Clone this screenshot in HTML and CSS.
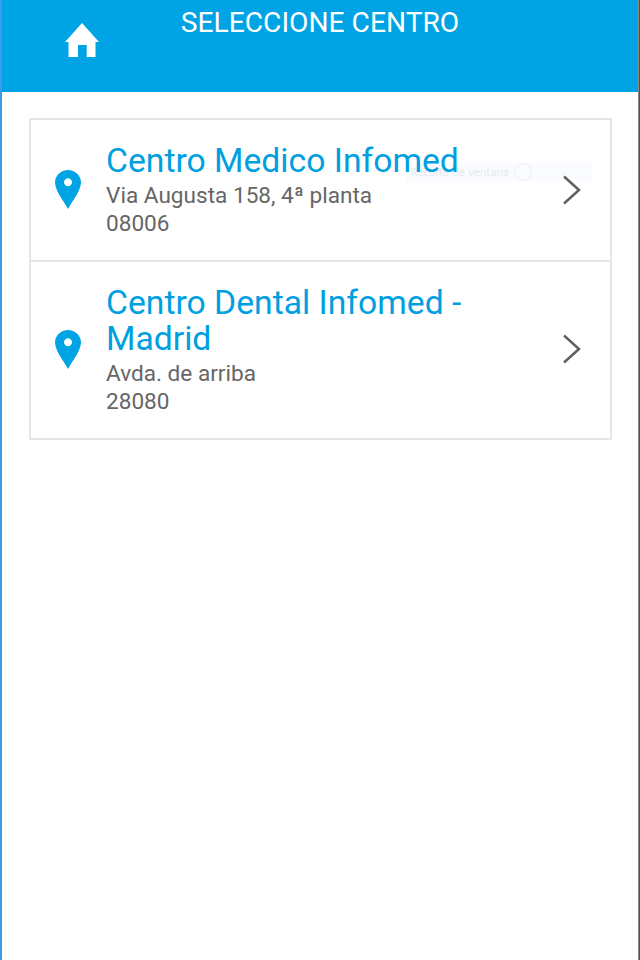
FILE: index.html
```html
<!DOCTYPE html>
<html lang="es">
<head>
<meta charset="utf-8">
<title>Seleccione centro</title>
<link rel="stylesheet" href="styles.css">
</head>
<body>
<div class="app">
  <header class="topbar">
    <svg class="home" viewBox="0 0 34 34" width="34" height="34"><path d="M17 0 L34 19 H30.500 V34 H21.700 V22 H13 V34 H3.500 V19 H0 Z" fill="#fff"/></svg>
    <h1 class="title">SELECCIONE CENTRO</h1>
  </header>
  <main class="content">
    <ul class="list">
      <li class="item first">
        <svg class="pin" viewBox="0 0 26 39" width="26" height="39"><path fill-rule="evenodd" d="M13 0C5.800 0 0 5.600 0 12.600 0 20.500 8.500 31 13 39 17.500 31 26 20.500 26 12.600 26 5.600 20.200 0 13 0ZM13 8.300C15.200 8.300 17 10.100 17 12.300 17 14.500 15.200 16.300 13 16.300 10.800 16.300 9 14.500 9 12.300 9 10.100 10.800 8.300 13 8.300Z" fill="#00a3e4"/></svg>
        <div class="text">
          <h2 class="name">Centro Medico Infomed</h2>
          <p class="addr">Via Augusta 158, 4ª planta</p>
          <p class="addr">08006</p>
        </div>
        <svg class="chev" viewBox="0 0 20 30" width="20" height="30"><path d="M2 1.500 L17 15 L2 28.500" fill="none" stroke="#606060" stroke-width="2.500"/></svg>
        <div class="ghost"><span class="ghost-text">Recorte de ventana</span><span class="ghost-ring"></span></div>
      </li>
      <li class="item">
        <svg class="pin" viewBox="0 0 26 39" width="26" height="39"><path fill-rule="evenodd" d="M13 0C5.800 0 0 5.600 0 12.600 0 20.500 8.500 31 13 39 17.500 31 26 20.500 26 12.600 26 5.600 20.200 0 13 0ZM13 8.300C15.200 8.300 17 10.100 17 12.300 17 14.500 15.200 16.300 13 16.300 10.800 16.300 9 14.500 9 12.300 9 10.100 10.800 8.300 13 8.300Z" fill="#00a3e4"/></svg>
        <div class="text">
          <h2 class="name">Centro Dental Infomed -<br>Madrid</h2>
          <p class="addr">Avda. de arriba</p>
          <p class="addr">28080</p>
        </div>
        <svg class="chev" viewBox="0 0 20 30" width="20" height="30"><path d="M2 1.500 L17 15 L2 28.500" fill="none" stroke="#606060" stroke-width="2.500"/></svg>
      </li>
    </ul>
  </main>
</div>
</body>
</html>
```
FILE: styles.css
```css
* { box-sizing: border-box; }
html, body { margin: 0; padding: 0; background: #fff; }
body {
  font-family: Roboto, "Noto Sans", sans-serif;
  width: 640px;
  border-right: 1px solid #1d5f92;
}
.app {
  height: 960px;
  border-left: 2px solid #3a9be8;
  border-right: 1px solid #8a8a8a;
  background: #fff;
  display: flex;
  flex-direction: column;
}
.topbar {
  height: 92px;
  background: #00a3e4;
  position: relative;
  flex: none;
  text-align: center;
}
.home { position: absolute; left: 63px; top: 23px; }
.title {
  margin: 0;
  padding-top: 8px;
  font-size: 28.200px;
  line-height: 30px;
  font-weight: 400;
  color: #fff;
}
.content { padding: 26px 26px 0 27px; }
.list {
  list-style: none;
  margin: 0;
  padding: 0;
  border: 2px solid #e6e6e6;
}
.item {
  display: flex;
  align-items: center;
  padding: 0 28px 0 24px;
  position: relative;
  border-top: 2px solid #e6e6e6;
}
.item.first { border-top: 0; height: 140px; }
.item:not(.first) { height: 178px; }
.pin { flex: none; margin-bottom: 2px; }
.text { flex: 1; margin-left: 25px; position: relative; z-index: 1; }
.name {
  margin: 0 0 3px;
  font-size: 33.700px;
  line-height: 36px;
  font-weight: 400;
  color: #009fe0;
}
.addr {
  margin: 0;
  font-size: 22.600px;
  line-height: 28px;
  color: #666;
}
.chev { flex: none; margin-bottom: 2px; position: relative; z-index: 1; }
.first .chev { margin-bottom: 0; }
.ghost {
  position: absolute;
  right: 18px;
  top: 43px;
  width: 186px;
  height: 18px;
  background: #f9fbfe;
  display: flex;
  justify-content: flex-end;
  align-items: center;
  gap: 5px;
  padding-right: 60px;
  font-family: "DejaVu Sans", sans-serif;
  font-size: 10px;
  color: #e6eaf0;
  white-space: nowrap;
}
.ghost-ring {
  flex: none;
  width: 18px;
  height: 18px;
  border: 1px solid #eef1f4;
  border-radius: 50%;
}
```
